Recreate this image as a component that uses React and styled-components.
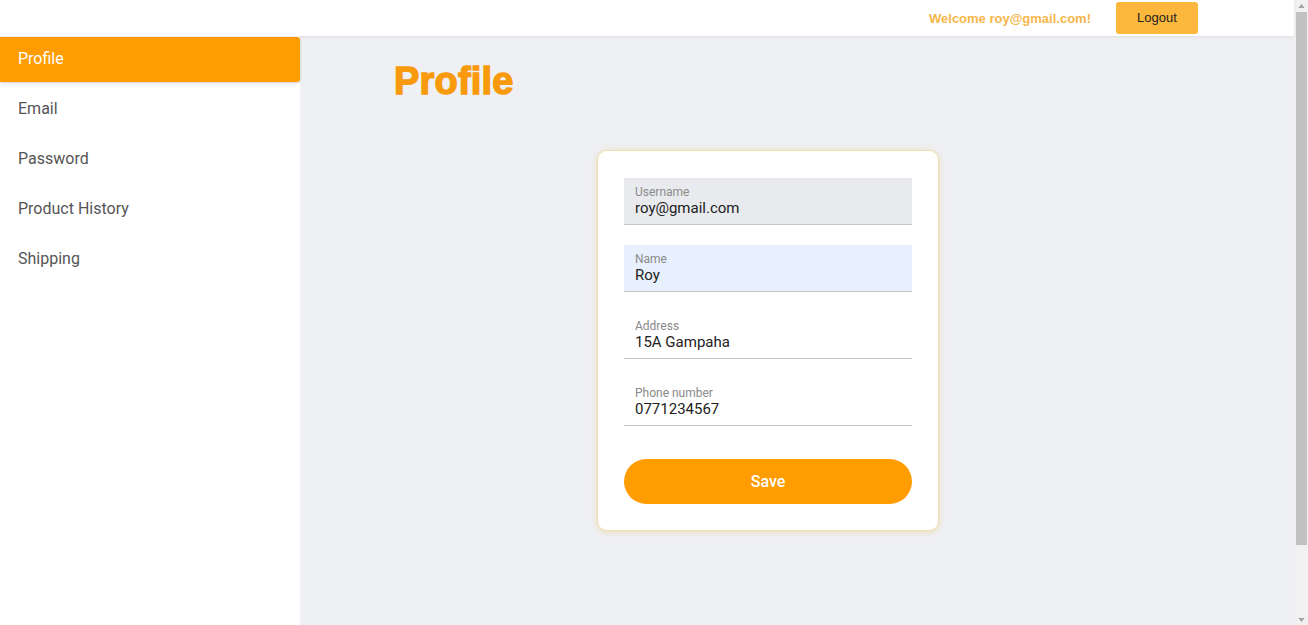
import styled, { createGlobalStyle } from 'styled-components';

const GlobalStyle = createGlobalStyle`
  html, body {
    margin: 0;
    padding: 0;
    height: 100%;
    overflow: hidden;
  }
  body {
    font-family: Roboto, "Liberation Sans", sans-serif;
    background: #eff0f4;
  }
  * {
    box-sizing: border-box;
  }
`;

const navItems = ['Profile', 'Email', 'Password', 'Product History', 'Shipping'];

const fields = [
  { label: 'Username', value: 'roy@gmail.com', tone: 'disabled' },
  { label: 'Name', value: 'Roy', tone: 'filled' },
  { label: 'Address', value: '15A Gampaha', tone: 'plain' },
  { label: 'Phone number', value: '0771234567', tone: 'plain' },
];

export default function App() {
  return (
    <>
      <GlobalStyle />
      <Window>
        <Page>
          <TopBar>
            <Welcome>Welcome roy@gmail.com!</Welcome>
            <LogoutButton>Logout</LogoutButton>
          </TopBar>

          <Body>
            <Sidebar>
              {navItems.map((item, i) => (
                <NavItem key={item} $active={i === 0}>
                  {item}
                </NavItem>
              ))}
            </Sidebar>

            <Main>
              <Title>Profile</Title>
              <Card>
                {fields.map((f) => (
                  <Field key={f.label} $tone={f.tone}>
                    <FieldLabel>{f.label}</FieldLabel>
                    <FieldValue>{f.value}</FieldValue>
                  </Field>
                ))}
                <SaveButton>Save</SaveButton>
              </Card>
            </Main>
          </Body>
        </Page>

        {/* browser scrollbar as seen in the screenshot */}
        <ScrollRail>
          <Arrow viewBox="0 0 8 5">
            <path d="M4 0 L8 5 L0 5 Z" />
          </Arrow>
          <Thumb />
          <Arrow viewBox="0 0 8 5">
            <path d="M0 0 L8 0 L4 5 Z" />
          </Arrow>
        </ScrollRail>
      </Window>
    </>
  );
}

const fieldTones = {
  disabled: '#e8eaed',
  filled: '#e8f0fe',
  plain: '#ffffff',
};

const Window = styled.div`
  height: 625px;
  display: flex;
  overflow: hidden;
`;

const Page = styled.div`
  flex: 1;
  display: flex;
  flex-direction: column;
`;

const ScrollRail = styled.div`
  width: 14px;
  background: #f1f1f1;
  display: flex;
  flex-direction: column;
  align-items: center;
  padding: 4px 0 3px;
`;

const Arrow = styled.svg`
  width: 7px;
  height: 4px;
  fill: #a3a3a3;
`;

const Thumb = styled.div`
  width: 11px;
  height: 533px;
  margin: 4px 0 auto 1px;
  background: #c1c1c1;
`;

const TopBar = styled.header`
  height: 36px;
  background: #ffffff;
  display: flex;
  align-items: center;
  justify-content: flex-end;
  padding-right: 96px;
  gap: 25px;
  box-shadow: 0 1px 3px rgba(0, 0, 0, 0.08);
  position: relative;
  z-index: 1;
`;

const Welcome = styled.span`
  font-family: 'Liberation Sans', Arial, sans-serif;
  font-weight: 700;
  font-size: 13px;
  color: #f6b64a;
`;

const LogoutButton = styled.button`
  width: 82px;
  height: 32px;
  border: none;
  border-radius: 3px;
  background: #fbb83c;
  color: #222;
  font-family: 'Liberation Sans', Arial, sans-serif;
  font-size: 13px;
  padding-bottom: 3px;
`;

const Body = styled.div`
  flex: 1;
  display: flex;
`;

const Sidebar = styled.nav`
  width: 300px;
  background: #ffffff;
  padding-top: 1px;
  display: flex;
  flex-direction: column;
  gap: 5px;
`;

const NavItem = styled.div`
  height: 45px;
  display: flex;
  align-items: center;
  padding-left: 18px;
  padding-bottom: 3px;
  font-size: 16px;
  color: ${(p) => (p.$active ? '#ffffff' : '#555555')};
  background: ${(p) => (p.$active ? '#ff9c00' : 'transparent')};
  border-radius: ${(p) => (p.$active ? '0 3px 3px 0' : '0')};
  box-shadow: ${(p) => (p.$active ? '0 1px 3px rgba(0,0,0,0.2)' : 'none')};
`;

const Main = styled.main`
  flex: 1;
  display: flex;
  flex-direction: column;
  align-items: flex-start;
`;

const Title = styled.h1`
  margin: 24px 0 0 94px;
  font-family: 'Liberation Sans', Arial, sans-serif;
  font-weight: 700;
  font-size: 38px;
  line-height: 42px;
  color: #f89a0c;
  letter-spacing: 0.2px;
  -webkit-text-stroke: 1.4px #f89a0c;
`;

const Card = styled.section`
  width: 342px;
  margin: 48px 0 0 297px;
  padding: 27px 26px 26px 26px;
  background: #ffffff;
  border: 1px solid #f3dfb4;
  border-radius: 10px;
  box-shadow: 0 1px 6px rgba(240, 190, 100, 0.45);
  display: flex;
  flex-direction: column;
  gap: 20px;
`;

const Field = styled.div`
  height: 47px;
  padding: 7px 11px 0;
  background: ${(p) => fieldTones[p.$tone]};
  border-bottom: 1px solid #c4c4c4;
  display: flex;
  flex-direction: column;
`;

const FieldLabel = styled.span`
  font-size: 12px;
  line-height: 14px;
  color: #8a8a8a;
`;

const FieldValue = styled.span`
  font-size: 15px;
  line-height: 19px;
  color: #222222;
`;

const SaveButton = styled.button`
  margin-top: 13px;
  height: 45px;
  border: none;
  border-radius: 23px;
  background: #ff9c00;
  color: #ffffff;
  font-family: Roboto, sans-serif;
  font-weight: 500;
  font-size: 16px;
`;
